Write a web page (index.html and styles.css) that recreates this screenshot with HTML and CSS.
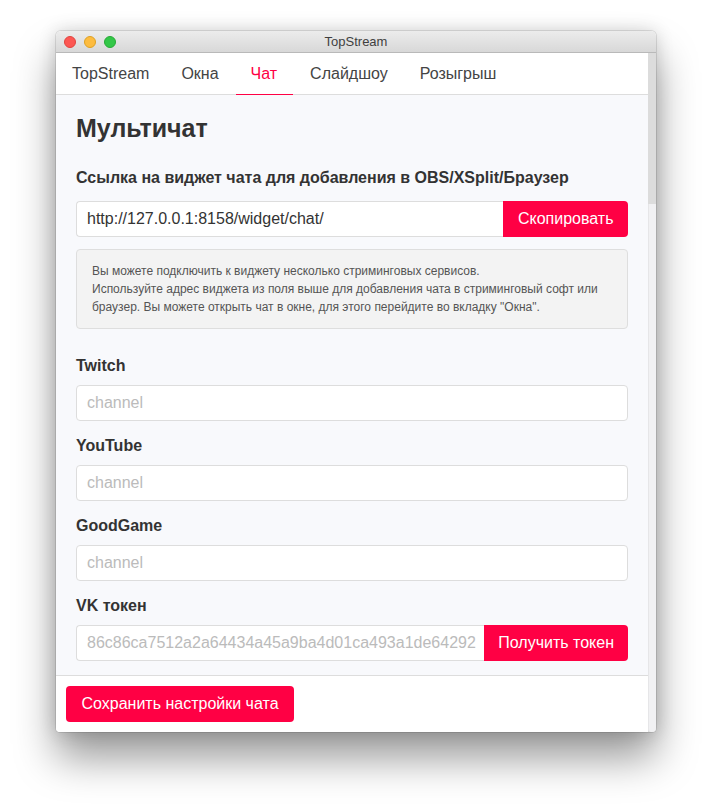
FILE: index.html
```html
<!DOCTYPE html>
<html lang="ru">
<head>
<meta charset="utf-8">
<title>TopStream</title>
<link rel="stylesheet" href="styles.css">
</head>
<body>
<div class="window">
  <div class="titlebar">
    <div class="lights">
      <span class="light red"></span>
      <span class="light yellow"></span>
      <span class="light green"></span>
    </div>
    <div class="title">TopStream</div>
  </div>
  <div class="frame">
    <div class="app">
      <nav class="tabs">
        <a class="tab">TopStream</a>
        <a class="tab">Окна</a>
        <a class="tab active">Чат</a>
        <a class="tab">Слайдшоу</a>
        <a class="tab">Розыгрыш</a>
      </nav>
      <main class="content">
        <h2 class="heading">Мультичат</h2>
        <div class="field first">
          <label class="label">Ссылка на виджет чата для добавления в OBS/XSplit/Браузер</label>
          <div class="input-group">
            <input class="input" type="text" value="http://127.0.0.1:8158/widget/chat/">
            <button class="btn btn-attached btn-copy">Скопировать</button>
          </div>
        </div>
        <div class="info">
          Вы можете подключить к виджету несколько стриминговых сервисов.<br>
          Используйте адрес виджета из поля выше для добавления чата в стриминговый софт или браузер. Вы можете открыть чат в окне, для этого перейдите во вкладку "Окна".
        </div>
        <div class="field">
          <label class="label">Twitch</label>
          <input class="input" type="text" placeholder="channel">
        </div>
        <div class="field">
          <label class="label">YouTube</label>
          <input class="input" type="text" placeholder="channel">
        </div>
        <div class="field">
          <label class="label">GoodGame</label>
          <input class="input" type="text" placeholder="channel">
        </div>
        <div class="field">
          <label class="label">VK токен</label>
          <div class="input-group">
            <input class="input" type="text" placeholder="86c86ca7512a2a64434a45a9ba4d01ca493a1de64292">
            <button class="btn btn-attached">Получить токен</button>
          </div>
        </div>
      </main>
      <footer class="footer">
        <button class="btn">Сохранить настройки чата</button>
      </footer>
    </div>
    <div class="scrollbar"><div class="thumb"></div></div>
  </div>
</div>
</body>
</html>
```
FILE: styles.css
```css
* { box-sizing: border-box; }
html, body {
  margin: 0;
  height: 100%;
  background: #ffffff;
}
body {
  padding: 31px 0 0 56px;
  font-family: "Liberation Sans", Arial, sans-serif;
  color: #333333;
}
.window {
  width: 600px;
  height: 701px;
  display: flex;
  flex-direction: column;
  border-radius: 5px 5px 4px 4px;
  overflow: hidden;
  background: #ffffff;
  box-shadow: 0 26px 42px rgba(0,0,0,0.40), 0 0 18px rgba(0,0,0,0.16), 0 0 0 1px rgba(0,0,0,0.10);
}
.titlebar {
  height: 22px;
  flex: none;
  position: relative;
  display: flex;
  align-items: center;
  justify-content: center;
  background: linear-gradient(#ececec, #d8d8d8);
  border-bottom: 1px solid #b9b9b9;
}
.lights {
  position: absolute;
  left: 8px;
  top: 5px;
  display: flex;
  gap: 8px;
}
.light {
  width: 12px;
  height: 12px;
  border-radius: 50%;
}
.red { background: #fc5753; border: 1px solid #e0443e; }
.yellow { background: #fdbc40; border: 1px solid #dea123; }
.green { background: #33c748; border: 1px solid #27aa35; }
.title {
  font-size: 13px;
  color: #3f3f3f;
  line-height: 22px;
}
.frame {
  flex: 1;
  display: flex;
  min-height: 0;
}
.app {
  flex: 1;
  display: flex;
  flex-direction: column;
  min-width: 0;
}
.tabs {
  height: 42px;
  flex: none;
  display: flex;
  padding-left: 1px;
  border-bottom: 1px solid #dddddd;
  background: #ffffff;
}
.tab {
  padding: 0 15px;
  height: 42px;
  line-height: 41px;
  font-size: 16px;
  color: #444444;
  margin-right: 2px;
}
.tab.active {
  color: #ff0044;
  border-bottom: 2px solid #ff0044;
  height: 43px;
  margin-bottom: -1px;
  padding: 0 16px 0 15px;
}
.content {
  flex: 1;
  overflow: hidden;
  background: #f8f9fc;
  padding: 18px 20px 0 20px;
}
.heading {
  margin: 0 0 25px 0;
  font-size: 25px;
  line-height: 30px;
  font-weight: bold;
  color: #333333;
}
.field {
  margin-bottom: 15px;
}
.label {
  display: block;
  font-size: 16px;
  line-height: 20px;
  font-weight: bold;
  color: #333333;
  margin-bottom: 9px;
}
.field.first {
  margin-bottom: 12px;
}
.field.first .label {
  margin-bottom: 13px;
}
.input-group {
  display: flex;
}
.input {
  display: block;
  width: 100%;
  height: 36px;
  padding: 0 10px;
  font-family: "Liberation Sans", Arial, sans-serif;
  font-size: 16px;
  color: #333333;
  background: #ffffff;
  border: 1px solid #dddddd;
  border-radius: 4px;
  outline: none;
}
.input::placeholder {
  color: #bbbbbb;
}
.input-group .input {
  flex: 1;
  min-width: 0;
  padding-right: 2px;
  border-radius: 4px 0 0 4px;
  border-right: none;
}
.btn {
  height: 36px;
  padding: 0 14px;
  font-family: "Liberation Sans", Arial, sans-serif;
  font-size: 16px;
  color: #ffffff;
  background: #ff0044;
  border: none;
  border-radius: 4px;
  white-space: nowrap;
}
.btn-attached {
  border-radius: 0 4px 4px 0;
}
.btn-copy {
  padding: 0 14.5px;
}
.info {
  margin-bottom: 27px;
  padding: 12px 15px;
  background: #f3f3f3;
  border: 1px solid #dedede;
  border-radius: 4px;
  font-size: 12px;
  line-height: 18px;
  color: #555555;
}
.footer {
  flex: none;
  border-top: 1px solid #dddddd;
  padding: 10px;
  background: #ffffff;
}
.footer .btn {
  width: 228px;
}
.scrollbar {
  width: 8px;
  flex: none;
  background: #dcdcdc;
  display: flex;
  flex-direction: column;
  padding-top: 151px;
}
.thumb {
  flex: 1;
  background: #f1f1f3;
  border-left: 1px solid #e6e6e8;
  border-radius: 0 0 3px 3px;
}
```
